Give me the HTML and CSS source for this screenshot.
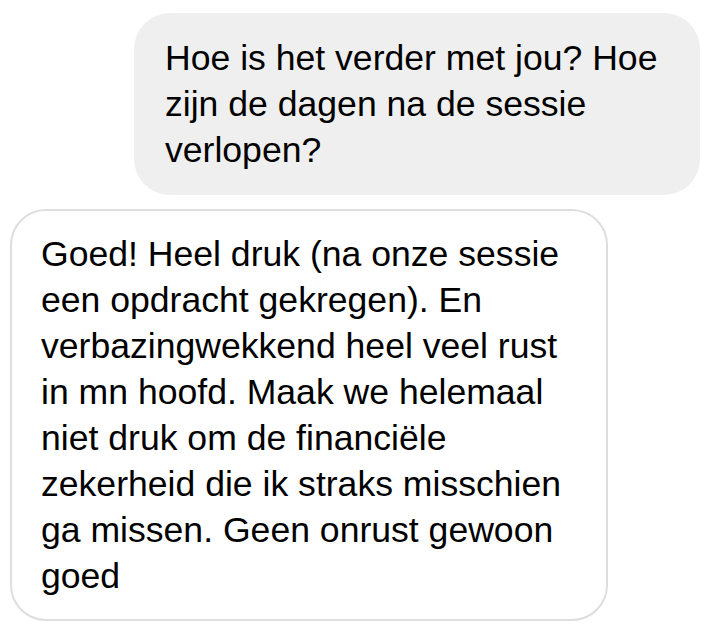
FILE: index.html
```html
<!DOCTYPE html>
<html lang="en">
<head>
<meta charset="UTF-8">
<meta name="viewport" content="width=device-width, initial-scale=1.0">
<title>Chat</title>

<link rel="stylesheet" href="styles.css">

</head>
<body>

<div class="chat">
    <!-- sent message -->
    <div class="bubble sent">
        <p>Hoe is het verder met jou? Hoe<br>zijn de dagen na de sessie<br>verlopen?</p>
    </div>

    <!-- received message -->
    <div class="bubble received">
        <p>Goed! Heel druk (na onze sessie<br>een opdracht gekregen). En<br>verbazingwekkend heel veel rust<br>in mn hoofd. Maak we helemaal<br>niet druk om de financiële<br>zekerheid die ik straks misschien<br>ga missen. Geen onrust gewoon<br>goed</p>
    </div>
</div>

</body>
</html>
```

FILE: styles.css
```css
body {
    margin: 0;
    background-color: #ffffff;
    font-family: "Liberation Sans", Arial, sans-serif;
}

/* Column of messages */
.chat {
    display: flex;
    flex-direction: column;
    padding: 13px 25px 0 10px;
    gap: 14px;
}

.bubble {
    box-sizing: border-box;
    border-radius: 36px;
    padding: 22px 31px;
}

.bubble p {
    margin: 0;
    font-size: 35.6px;
    line-height: 46px;
    color: #000000;
    white-space: nowrap;
}

/* Grey bubble on the right */
.sent {
    align-self: flex-end;
    width: 566px;
    background-color: #efefef;
}

/* White bubble with outline on the left */
.received {
    align-self: flex-start;
    width: 598px;
    background-color: #ffffff;
    border: 2px solid #dedede;
    padding: 20px 29px;
}
```
